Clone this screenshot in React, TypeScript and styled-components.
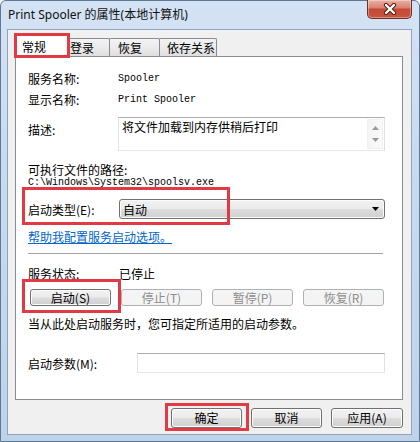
import React from "react";
import styled, { createGlobalStyle } from "styled-components";

const Global = createGlobalStyle`
  html, body { margin: 0; padding: 0; background: #ffffff; }
  body {
    width: 420px; height: 442px; overflow: hidden;
    font-family: "Noto Sans CJK SC", "Noto Sans", sans-serif;
    font-size: 12px; color: #000;
  }
  * { box-sizing: border-box; }
`;

const Window = styled.div`
  width: 420px;
  height: 442px;
  display: flex;
  flex-direction: column;
  padding: 0 7px 6px 6px;
  background: linear-gradient(180deg, #d4e3f4 0%, #c9dbef 35%, #bed3ea 100%);
  border: 1px solid #5f7896;
  border-radius: 6px 6px 0 0;
`;

const TitleBar = styled.div`
  height: 28px;
  display: flex;
  align-items: flex-start;
  justify-content: space-between;
`;

const Title = styled.div`
  padding-left: 1px;
  line-height: 27px;
  font-family: "Noto Sans", "Noto Sans CJK SC", sans-serif;
  font-size: 12px;
  color: #111;
`;

const CloseButton = styled.div`
  width: 45px;
  height: 19px;
  margin-top: -1px;
  display: flex;
  align-items: center;
  justify-content: center;
  border: 1px solid #6e2f25;
  border-top: none;
  border-radius: 0 0 5px 5px;
  background: linear-gradient(180deg, #eab0a2 0%, #d98372 42%, #c44a36 52%, #c9553f 100%);
  box-shadow: inset 0 0 0 1px rgba(255, 255, 255, 0.35);
`;

const Client = styled.div`
  flex: 1;
  display: flex;
  flex-direction: column;
  padding: 4px 8px 0 7px;
  border: 1px solid #8ea4bd;
  background: #f0f0f0;
`;

const TabStrip = styled.div`
  height: 22px;
  display: flex;
  align-items: flex-end;
  position: relative;
  z-index: 2;
`;

const Tab = styled.div<{ $w: number; $pad: number; $active?: boolean; $shift?: number }>`
  position: relative;
  width: ${(p) => p.$w}px;
  height: ${(p) => (p.$active ? 23 : 18)}px;
  margin-bottom: ${(p) => (p.$active ? -1 : 0)}px;
  margin-left: ${(p) => p.$shift ?? 0}px;
  z-index: ${(p) => (p.$active ? 2 : 1)};
  padding-left: ${(p) => p.$pad}px;
  line-height: ${(p) => (p.$active ? 24 : 18)}px;
  border: 1px solid #898c95;
  border-bottom: none;
  border-radius: 2px 2px 0 0;
  background: ${(p) =>
    p.$active ? "#ffffff" : "linear-gradient(180deg, #f3f3f3 0%, #ebebeb 50%, #dedede 100%)"};
  white-space: nowrap;
`;

const Panel = styled.div`
  height: 344px;
  display: flex;
  flex-direction: column;
  padding: 11px 17px 0 12px;
  border: 1px solid #898c95;
  background: #ffffff;
`;

const FieldRow = styled.div<{ $label: number; $h: number; $mt?: number }>`
  display: grid;
  grid-template-columns: ${(p) => p.$label}px 1fr;
  align-items: center;
  height: ${(p) => p.$h}px;
  margin-top: ${(p) => p.$mt ?? 0}px;
  position: relative;
`;

const Label = styled.span`
  white-space: nowrap;
`;

const Mono = styled.span`
  font-family: "Liberation Mono", "DejaVu Sans Mono", monospace;
  font-size: 10px;
  white-space: nowrap;
`;

const DescRow = styled.div`
  display: grid;
  grid-template-columns: 90px 1fr;
  margin-top: 7px;
`;

const DescLabel = styled.span`
  padding-top: 4px;
  line-height: 18px;
`;

const TextArea = styled.div`
  height: 34px;
  display: flex;
  border: 1px solid #abadb3;
  border-color: #abadb3 #dbdfe6 #e3e9ef #e2e3ea;
  background: #fff;
`;

const TextAreaText = styled.div`
  flex: 1;
  padding: 2px 3px;
  line-height: 14px;
`;

const ScrollBar = styled.div`
  width: 16px;
  margin: 1px 1px 1px 0;
  display: flex;
  flex-direction: column;
  justify-content: space-between;
  align-items: center;
  padding: 6px 0 6px;
  background: linear-gradient(90deg, #f4f4f4, #fafafa);
  border: 1px solid #f0f0f0;
`;

const PathBlock = styled.div`
  margin-top: 12px;
  display: flex;
  flex-direction: column;
  line-height: 13px;
`;

const Combo = styled.div`
  height: 20px;
  display: flex;
  align-items: center;
  justify-content: space-between;
  padding: 0 5px 0 3px;
  border: 1px solid #707070;
  border-radius: 3px;
  background: linear-gradient(180deg, #f2f2f2 0%, #ebebeb 48%, #dddddd 52%, #cfcfcf 100%);
  box-shadow: inset 0 0 0 1px #fbfbfb;
`;

const Link = styled.a`
  margin-top: 11px;
  line-height: 14px;
  color: #0066cc;
  text-decoration: underline;
  align-self: flex-start;
  cursor: pointer;
`;

const Separator = styled.div`
  margin-top: 9px;
  margin-right: 2px;
  height: 2px;
  border-top: 1px solid #a0a0a0;
  border-bottom: 1px solid #ffffff;
`;

const ButtonRow = styled.div`
  margin-top: 8px;
  padding-left: 2px;
  margin-right: 1px;
  display: flex;
  justify-content: space-between;
`;

const Anchor = styled.div`
  position: relative;
  display: flex;
`;

const Button = styled.button<{ $w: number; $h: number }>`
  width: ${(p) => p.$w}px;
  height: ${(p) => p.$h}px;
  padding: 0;
  font-family: "Noto Sans CJK SC", "Noto Sans", sans-serif;
  font-size: 12px;
  line-height: 1;
  color: #000;
  border: 1px solid #707070;
  border-radius: 3px;
  background: linear-gradient(180deg, #f2f2f2 0%, #ebebeb 48%, #dddddd 52%, #cfcfcf 100%);
  box-shadow: inset 0 0 0 1px #fcfcfc;
  &:disabled {
    color: #8d8d8d;
    border-color: #adb2b5;
    background: #f4f4f4;
    box-shadow: none;
  }
`;

const Hint = styled.div`
  margin-top: 11px;
  line-height: 14px;
`;

const Input = styled.div`
  height: 20px;
  border: 1px solid #abadb3;
  border-color: #abadb3 #dbdfe6 #e3e9ef #e2e3ea;
  background: #fff;
`;

const Footer = styled.div`
  margin-top: 8px;
  display: flex;
  justify-content: flex-end;
  gap: 9px;
`;

const Highlight = styled.span<{ $t: number; $l: number; $w: number; $h: number }>`
  position: absolute;
  top: ${(p) => p.$t}px;
  left: ${(p) => p.$l}px;
  width: ${(p) => p.$w}px;
  height: ${(p) => p.$h}px;
  border: 3px solid #e23a45;
  pointer-events: none;
  z-index: 5;
`;

const CloseIcon = () => (
  <svg width="14" height="12" viewBox="0 0 14 12">
    <path d="M3 2 L11 10 M11 2 L3 10" stroke="#4a1a12" strokeWidth="4.2" strokeLinecap="round" />
    <path d="M3 2 L11 10 M11 2 L3 10" stroke="#ffffff" strokeWidth="2.4" strokeLinecap="round" />
  </svg>
);

const Arrow = ({ up, color }: { up?: boolean; color: string }) => (
  <svg width="7" height="4" viewBox="0 0 7 4">
    <path d={up ? "M0 4 L3.5 0 L7 4 Z" : "M0 0 L7 0 L3.5 4 Z"} fill={color} />
  </svg>
);

export default function App() {
  return (
    <>
      <Global />
      <Window>
        <TitleBar>
          <Title>Print Spooler 的属性(本地计算机)</Title>
          <CloseButton>
            <CloseIcon />
          </CloseButton>
        </TitleBar>
        <Client>
          <TabStrip>
            <Tab $active $w={53} $pad={6}>
              常规
              <Highlight $t={-2} $l={-2} $w={56} $h={25} />
            </Tab>
            <Tab $w={46} $pad={5} $shift={-4}>登录</Tab>
            <Tab $w={51} $pad={8} $shift={-1}>恢复</Tab>
            <Tab $w={58} $pad={7} $shift={-1}>依存关系</Tab>
          </TabStrip>
          <Panel>
            <FieldRow $label={90} $h={21}>
              <Label>服务名称:</Label>
              <Mono>Spooler</Mono>
            </FieldRow>
            <FieldRow $label={90} $h={21}>
              <Label>显示名称:</Label>
              <Mono>Print Spooler</Mono>
            </FieldRow>
            <DescRow>
              <DescLabel>描述:</DescLabel>
              <TextArea>
                <TextAreaText>将文件加载到内存供稍后打印</TextAreaText>
                <ScrollBar>
                  <Arrow up color="#9a9a9a" />
                  <Arrow color="#9a9a9a" />
                </ScrollBar>
              </TextArea>
            </DescRow>
            <PathBlock>
              <span>可执行文件的路径:</span>
              <Mono>C:\Windows\System32\spoolsv.exe</Mono>
            </PathBlock>
            <FieldRow $label={91} $h={20} $mt={10}>
              <Label>启动类型(E):</Label>
              <Combo>
                <span>自动</span>
                <Arrow color="#000" />
              </Combo>
              <Highlight $t={-12} $l={-6} $w={208} $h={38} />
            </FieldRow>
            <Link>帮助我配置服务启动选项。</Link>
            <Separator />
            <FieldRow $label={91} $h={16} $mt={10}>
              <Label>服务状态:</Label>
              <span>已停止</span>
            </FieldRow>
            <ButtonRow>
              <Anchor>
                <Button $w={81} $h={17}>启动(S)</Button>
                <Highlight $t={-10} $l={-8} $w={99} $h={34} />
              </Anchor>
              <Button $w={81} $h={17} disabled>停止(T)</Button>
              <Button $w={81} $h={17} disabled>暂停(P)</Button>
              <Button $w={81} $h={17} disabled>恢复(R)</Button>
            </ButtonRow>
            <Hint>当从此处启动服务时，您可指定所适用的启动参数。</Hint>
            <FieldRow $label={109} $h={20} $mt={22}>
              <Label>启动参数(M):</Label>
              <Input />
            </FieldRow>
          </Panel>
          <Footer>
            <Anchor>
              <Button $w={71} $h={20}>确定</Button>
              <Highlight $t={-5} $l={-6} $w={84} $h={28} />
            </Anchor>
            <Button $w={71} $h={20}>取消</Button>
            <Button $w={72} $h={20}>应用(A)</Button>
          </Footer>
        </Client>
      </Window>
    </>
  );
}
